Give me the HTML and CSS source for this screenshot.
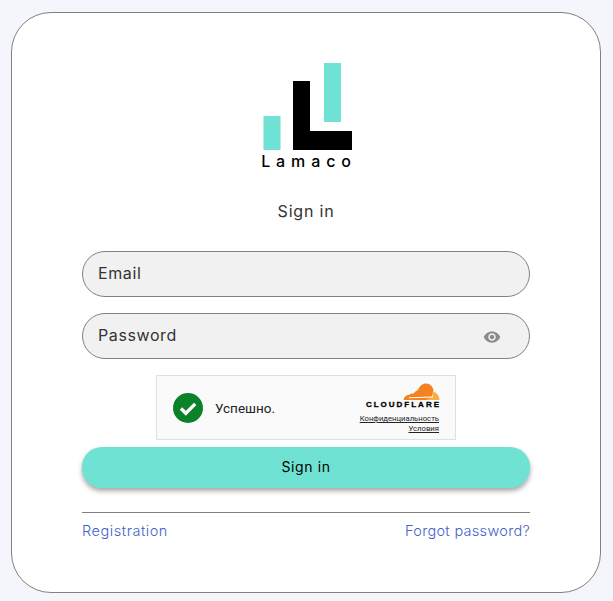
FILE: index.html
```html
<!DOCTYPE html>
<html lang="en">
<head>
<meta charset="utf-8">
<title>Sign in</title>
<link rel="stylesheet" href="styles.css">
</head>
<body>
<main class="card">
  <div class="logo">
    <svg class="logo-mark" width="89" height="87" viewBox="0 0 89 87" aria-hidden="true">
      <rect x="0.500" y="53" width="17" height="34" fill="#70e2d3"/>
      <rect x="61" y="0" width="17" height="59" fill="#70e2d3"/>
      <path d="M30 18h17v50h42v19H30z" fill="#000"/>
    </svg>
    <div class="logo-text">Lamaco</div>
  </div>
  <h1 class="title">Sign in</h1>
  <form class="form">
    <input class="field" type="text" placeholder="Email">
    <div class="field-wrap">
      <input class="field" type="password" placeholder="Password">
      <svg class="eye" width="18" height="18" viewBox="0 0 24 24" aria-hidden="true">
        <path fill="#8a8a8a" d="M12 4.5C7 4.5 2.73 7.61 1 12c1.73 4.39 6 7.5 11 7.5s9.27-3.11 11-7.5c-1.73-4.39-6-7.5-11-7.5zM12 17c-2.76 0-5-2.24-5-5s2.24-5 5-5 5 2.24 5 5-2.24 5-5 5zm0-8c-1.66 0-3 1.34-3 3s1.34 3 3 3 3-1.34 3-3-1.34-3-3-3z"/>
      </svg>
    </div>
    <div class="captcha">
      <svg class="check" width="30" height="30" viewBox="0 0 30 30" aria-hidden="true">
        <circle cx="15" cy="15" r="15" fill="#0b8129"/>
        <path d="M8 15.500l4.800 4.800 9.400-9.400" fill="none" stroke="#fff" stroke-width="3.400"/>
      </svg>
      <span class="captcha-text">Успешно.</span>
      <div class="cf">
        <svg class="cf-cloud" width="37" height="18" viewBox="0 0 37 18" aria-hidden="true">
          <path fill="#f6821f" d="M0.500 17C0.800 14 3 12 6.500 11.800C7.500 10.800 9 10.300 10.500 10.800C12 8.500 13.500 7.500 15 7C16.500 3 19.500 .5 23 .5C27 .5 30 3.500 30.500 7.500L28.500 14.500L27.500 17Z"/>
          <path fill="#fbad41" d="M30 9C33.500 9 36.300 12.500 36.500 17L24 17L24.800 15.500L29.200 15C30.300 14 30.300 12.500 29 12Z"/>
          <path fill="#fff" d="M6 14.300L29 13.500L28.700 14.600L6 15.300Z"/>
        </svg>
        <div class="cf-name">CLOUDFLARE</div>
        <a class="cf-link" href="#">Конфиденциальность</a>
        <a class="cf-link" href="#">Условия</a>
      </div>
    </div>
    <button class="submit" type="button">Sign in</button>
  </form>
  <hr class="divider">
  <div class="links">
    <a class="link-wide" href="#">Registration</a>
    <a href="#">Forgot password?</a>
  </div>
</main>
</body>
</html>
```

FILE: styles.css
```css
* { box-sizing: border-box; }

html, body { margin: 0; height: 100%; }

body {
  background: #f5f5fc;
  padding: 12px 12px 8px 11px;
  font-family: "Inter", "Liberation Sans", sans-serif;
  color: #222;
  overflow: hidden;
}

.card {
  width: 590px;
  height: 581px;
  background: #fff;
  border: 1px solid #808080;
  border-radius: 40px;
  padding: 50px 70px 0;
  display: flex;
  flex-direction: column;
}

.logo {
  display: flex;
  flex-direction: column;
  align-items: center;
}

.logo-mark { display: block; margin-left: 3px; }

.logo-text {
  margin-top: 1px;
  height: 20px;
  line-height: 20px;
  font-family: "Inter", sans-serif;
  font-weight: 500;
  font-size: 16px;
  letter-spacing: 5.900px;
  margin-right: -6px;
  margin-bottom: 1px;
  color: #000;
}

.title {
  margin: 29px 0 0;
  font-size: 16px;
  font-weight: 400;
  letter-spacing: 0.800px;
  line-height: 20px;
  text-align: center;
  color: #333;
}

.form {
  margin-top: 30px;
  display: flex;
  flex-direction: column;
}

.field-wrap { position: relative; margin-top: 16px; }

.field {
  display: block;
  width: 100%;
  height: 46px;
  background: #f1f1f1;
  border: 1px solid #808080;
  border-radius: 23px;
  padding: 0 15px 2px;
  font: 400 16px "Inter", "Liberation Sans", sans-serif;
  letter-spacing: 0.600px;
  color: #333;
  outline: none;
}

.field::placeholder { color: #333; opacity: 1; }

.eye { position: absolute; right: 29px; top: 15px; }

.captcha {
  align-self: center;
  width: 300px;
  height: 65px;
  margin-top: 16px;
  background: #fafafa;
  border: 1px solid #e0e0e0;
  display: flex;
  align-items: center;
  padding-left: 16px;
}

.check { flex: none; }

.captcha-text {
  margin-left: 12px;
  font-family: "Roboto", sans-serif;
  font-size: 13.500px;
  color: #232323;
}

.cf {
  margin-left: auto;
  margin-right: 16px;
  display: flex;
  flex-direction: column;
  align-items: flex-end;
  font-family: "Roboto", sans-serif;
  align-self: flex-start;
  padding-top: 7px;
}

.cf-cloud { display: block; margin-right: -1px; }

.cf-name {
  height: 8px;
  font-family: "Liberation Sans", sans-serif;
  font-size: 8px;
  line-height: 8px;
  font-weight: 700;
  letter-spacing: 2px;
  margin-right: -2px;
  color: #000;
  -webkit-text-stroke: 0.300px #000;
}

.cf-link {
  font-size: 7.700px;
  line-height: 10px;
  color: #232323;
  text-decoration: underline;
}

.cf-name + .cf-link { margin-top: 5px; }

.submit {
  margin-top: 7px;
  height: 41px;
  background: #70e2d3;
  border: 0;
  border-radius: 20px;
  padding: 0 0 2px;
  box-shadow: 0 3px 5px rgba(0, 0, 0, 0.35);
  font: 400 14px "Inter", "Liberation Sans", sans-serif;
  letter-spacing: 0.600px;
  color: #000;
}

.divider {
  margin: 24px 0 0;
  height: 1px;
  border: 0;
  background: #808080;
}

.links {
  margin-top: 8px;
  display: flex;
  justify-content: space-between;
  font-size: 14.500px;
  font-weight: 300;
  letter-spacing: 0.300px;
  line-height: 20px;
}

.links a { color: #3f62cc; text-decoration: none; }

.links .link-wide { letter-spacing: 0.550px; }
```
